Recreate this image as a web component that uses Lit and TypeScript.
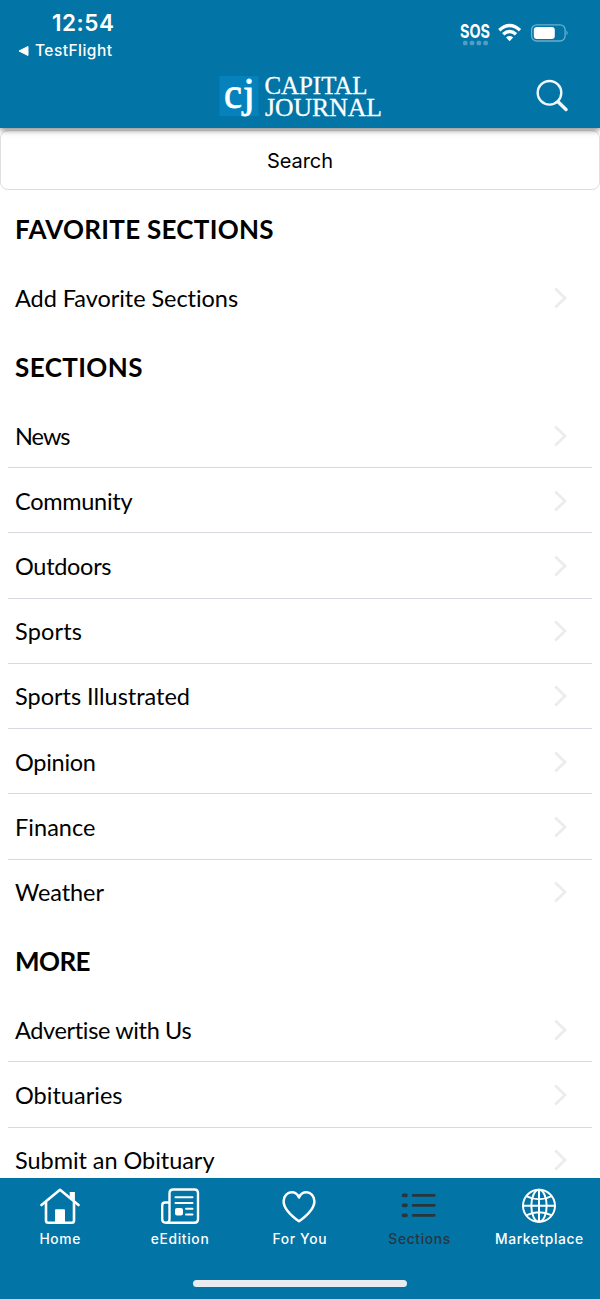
import { LitElement, html, css, svg } from "lit";
import { customElement, property } from "lit/decorators.js";

/** Text whose tracking is tuned so that it fills the given width. */
@customElement("fit-text")
class FitText extends LitElement {
  @property() text = "";
  @property({ type: Number }) width = 0;
  static styles = css`
    :host { display: inline-block; white-space: pre; }
    span { display: inline-block; }
  `;
  render() {
    return html`<span>${this.text}</span>`;
  }
  updated() {
    const span = this.renderRoot.querySelector("span")!;
    span.style.letterSpacing = "0px";
    const natural = span.getBoundingClientRect().width;
    const gap = (this.width - natural) / Math.max(1, this.text.length - 1);
    span.style.letterSpacing = `${gap}px`;
    span.style.marginRight = `${-gap}px`;
  }
}

type Item = [string, number];
interface Group { title: Item; items: Item[] }

const GROUPS: Group[] = [
  { title: ["FAVORITE SECTIONS", 258.5], items: [["Add Favorite Sections", 223.5]] },
  {
    title: ["SECTIONS", 127.5],
    items: [
      ["News", 55.5], ["Community", 117.5], ["Outdoors", 96.5], ["Sports", 67],
      ["Sports Illustrated", 175], ["Opinion", 81], ["Finance", 80.5], ["Weather", 89],
    ],
  },
  {
    title: ["MORE", 75.5],
    items: [["Advertise with Us", 177], ["Obituaries", 107.5], ["Submit an Obituary", 199.5]],
  },
];

const home = svg`
  <path d="M1.500 17 20 1.800 38.500 17" stroke-linecap="round" stroke-linejoin="round"/>
  <path d="M6 14V32.500Q6 34.700 8.200 34.700H31.800Q34 34.700 34 32.500V14M31 10V5.300H33.600V12.500"/>
  <path d="M15 22.200Q15 21.200 16 21.200H24Q25 21.200 25 22.200V34H15Z" fill="currentColor" stroke="none"/>`;
const paper = svg`
  <path d="M9.500 31V5.200Q9.500 1.500 13.200 1.500H34.500Q38 1.500 38 5V31.200Q38 34.700 34.500 34.700H5.800Q2.200 34.700 2.200 31V17.500Q2.200 14.500 5 14.500H9.500V31Q9.500 34.700 5.800 34.700" stroke-width="2.400"/>
  <path d="M15.500 9.300H32.500M15.500 15H32.500M26 20.700H32.500M26 26.500H32.500" stroke-width="2" stroke-linecap="round"/>
  <rect x="15" y="20" width="8" height="7.500" rx="2" fill="currentColor" stroke="none"/>`;
const heart = svg`
  <path d="M20 33.300C14 29 4.600 21.700 4.600 13.200C4.600 8 8.300 4.300 12.600 4.300C16 4.300 18.600 6.300 20 9.500C21.400 6.300 24 4.300 27.400 4.300C31.700 4.300 35.400 8 35.400 13.200C35.400 21.700 26 29 20 33.300Z" stroke-width="2.500" stroke-linejoin="round"/>`;
const list = svg`
  <path d="M4.500 7.400H7M4.500 17.400H7M4.500 27.400H7" stroke-width="3.600" stroke-linecap="round"/>
  <path d="M14.200 7.400H35.200M14.200 17.400H35.200M14.200 27.400H35.200" stroke-width="2.900" stroke-linecap="round"/>`;
const globe = svg`
  <g stroke-width="2"><circle cx="20" cy="17.800" r="16"/><ellipse cx="20" cy="17.800" rx="7.700" ry="16"/>
  <path d="M20 1.800V33.800M4 17.800H36M7.200 8.200Q20 14.500 32.800 8.200M7.200 27.400Q20 21.100 32.800 27.400"/></g>`;

const TABS = [
  { label: "Home", width: 41, icon: home },
  { label: "eEdition", width: 58, icon: paper },
  { label: "For You", width: 54, icon: heart },
  { label: "Sections", width: 62, icon: list, active: true },
  { label: "Marketplace", width: 88, icon: globe },
];

@customElement("app-root")
class AppRoot extends LitElement {
  static styles = css`
    :host {
      display: flex; flex-direction: column; height: 1299px; overflow: hidden;
      background: #fff; color: #000; font-family: Inter, sans-serif;
    }
    * { box-sizing: border-box; }
    svg { display: block; }
    header {
      flex: none; height: 128px; background: #0274a5; color: #fff; z-index: 1;
      box-shadow: 0 2px 6px rgba(0, 0, 0, 0.5); display: flex; flex-direction: column;
    }
    .status { height: 66px; display: flex; justify-content: space-between; padding: 9px 31px 0 17px; }
    .clock { padding-left: 35px; font-size: 22.500px; font-weight: 600; line-height: 28px; }
    .back { display: flex; align-items: center; gap: 6px; font-size: 15.500px; font-weight: 500; line-height: 27px; }
    .signals { padding-top: 12px; }
    .brand { display: grid; grid-template-columns: 1fr 170px 1fr; align-items: start; }
    .brand .logo { grid-column: 2; padding-top: 5px; }
    .brand .find { justify-self: end; padding: 12px 31px 0 0; }
    .logo text { font-family: "Liberation Serif", serif; }
    .sos { font-family: Inter, sans-serif; font-weight: 700; }
    .search {
      flex: none; height: 60px; margin-top: 2px; border: 1px solid #dedee0; border-radius: 8px;
      display: flex; align-items: center; justify-content: center; font-size: 20px; padding-top: 1px;
    }
    main { flex: 1; min-height: 0; overflow: hidden; padding-top: 3px; font-family: Lato, sans-serif; }
    h2 { margin: 0; height: 72.400px; padding: 0 15px; display: flex; align-items: center; font-size: 26px; font-weight: 700; }
    .item {
      height: 65.230px; margin: 0 8px; padding: 1px 25px 0 7px; display: flex; align-items: center;
      justify-content: space-between; font-size: 23.500px; border-bottom: 1px solid #d8d8e2;
    }
    .item:last-child { border-color: transparent; }
    nav {
      flex: none; height: 121px; background: #0274a5; color: #fff; display: flex;
      flex-direction: column; align-items: center; justify-content: space-between; padding: 10px 0 12px;
    }
    .tabs { width: 100%; display: grid; grid-template-columns: repeat(5, 119.800px); justify-content: start; }
    .tab { display: flex; flex-direction: column; align-items: center; font-size: 13.800px; font-weight: 500; line-height: 20px; gap: 4px; }
    .tab.active { color: #29363d; }
    .bar { width: 214px; height: 7px; border-radius: 4px; background: #e9ebee; }
  `;

  render() {
    return html`
      <header>
        <div class="status">
          <div>
            <div class="clock"><fit-text text="12:54" .width=${62}></fit-text></div>
            <div class="back">
              <svg width="12" height="12"><path d="M2 6 11 1.500V10.500Z" fill="#fff" stroke="#fff" stroke-linejoin="round"/></svg>
              <fit-text text="TestFlight" .width=${77}></fit-text>
            </div>
          </div>
          <svg class="signals" width="109" height="38" viewBox="0 0 109 26" fill="#fff">
            <text class="sos" x="0" y="17.300" font-size="19" textLength="30" lengthAdjust="spacingAndGlyphs">SOS</text>
            <g fill="#4f9fc4"><rect x="3" y="19.800" width="4.500" height="4.500" rx="1.500"/><rect x="9.800" y="19.800" width="4.500" height="4.500" rx="1.500"/><rect x="16.600" y="19.800" width="4.500" height="4.500" rx="1.500"/><rect x="23.400" y="19.800" width="4.500" height="4.500" rx="1.500"/></g>
            <g fill="none" stroke="#fff" stroke-width="3.400"><path d="M39.300 9.200Q49.600 -.2 60 9.200"/><path d="M43.200 13.300Q49.600 7.600 56 13.300"/></g>
            <path d="M46 16.500Q49.600 13.600 53.200 16.500L49.600 20.300Z"/>
            <rect x="71.600" y="3.800" width="33.500" height="16.200" rx="5" fill="none" stroke="#68b0d0" stroke-width="1.300"/>
            <rect x="73.800" y="6" width="21" height="12" rx="3"/>
            <path d="M106.500 9.500Q109 11.900 106.500 14.300Z" fill="#68b0d0"/>
          </svg>
        </div>
        <div class="brand">
          <svg class="logo" width="170" height="54" viewBox="0 0 170 49" fill="#fff">
            <rect x="4.500" y="5" width="39" height="40" fill="#0582bb"/>
            <g stroke="#fff" stroke-width=".8">
              <text x="9" y="37" font-size="45" textLength="18" lengthAdjust="spacingAndGlyphs">c</text>
              <text x="28" y="36.300" font-size="43">j</text>
            </g>
            <g font-size="25.500" stroke="#fff" stroke-width=".3">
              <text x="49.500" y="22.500" textLength="103" lengthAdjust="spacingAndGlyphs">CAPITAL</text>
              <text x="50" y="44.500" textLength="117" lengthAdjust="spacingAndGlyphs">JOURNAL</text>
            </g>
          </svg>
          <svg class="find" width="65" height="46" viewBox="0 0 34 34" fill="none" stroke="#eef8ff">
            <circle cx="14.500" cy="14.800" r="11.800" stroke-width="2.400"/>
            <path d="M23 23.800 31 31.500" stroke-width="3.500" stroke-linecap="round"/>
          </svg>
        </div>
      </header>
      <div class="search"><fit-text text="Search" .width=${66}></fit-text></div>
      <main>
        ${GROUPS.map((g) => html`
          <section>
            <h2><fit-text .text=${g.title[0]} .width=${g.title[1]}></fit-text></h2>
            ${g.items.map(([label, width]) => html`
              <div class="item">
                <fit-text .text=${label} .width=${width}></fit-text>
                <svg width="14" height="22" fill="none" stroke="#ececec" stroke-width="2.800"><path d="M2.200 1.500 12 11 2.200 20.500"/></svg>
              </div>`)}
          </section>`)}
      </main>
      <nav>
        <div class="tabs">
          ${TABS.map((t) => html`
            <div class="tab ${t.active ? "active" : ""}">
              <svg width="40" height="37" fill="none" stroke="currentColor" stroke-width="2.600">${t.icon}</svg>
              <fit-text .text=${t.label} .width=${t.width}></fit-text>
            </div>`)}
        </div>
        <div class="bar"></div>
      </nav>
    `;
  }
}
